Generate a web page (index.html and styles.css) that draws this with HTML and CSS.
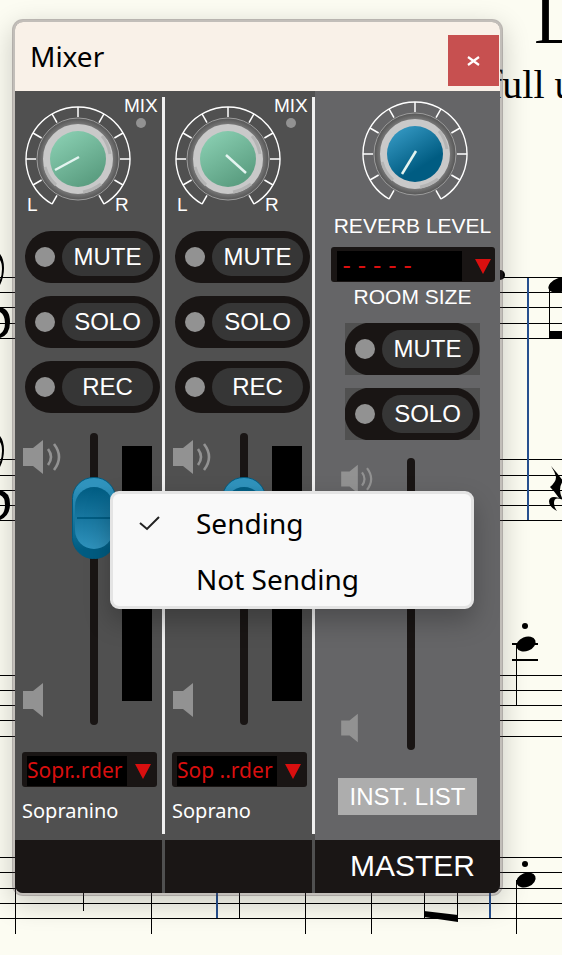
FILE: index.html
```
<!DOCTYPE html>
<html lang="en">
<head>
    <meta charset="UTF-8">
    <meta name="viewport" content="width=device-width, initial-scale=1.0">
    <title>Mixer</title>
    <link rel="stylesheet" href="styles.css">
</head>
<body>
    <!-- Score page behind the mixer -->
    <svg class="score" width="562" height="955" viewBox="0 0 562 955">
        <g class="staff">
            <path d="M0 277.5H562M0 292.5H562M0 307.5H562M0 323.5H562M0 338.5H562"/>
            <path d="M0 459.5H562M0 475.5H562M0 490.5H562M0 505.5H562M0 520.5H562"/>
            <path d="M0 675.5H562M0 690.5H562M0 705.5H562M0 720.5H562M0 736.5H562"/>
            <path d="M0 857.5H562M0 872.5H562M0 888.5H562M0 903.5H562M0 918.5H562"/>
            <path d="M15.5 880V934M83.5 880V911M151.5 880V934M239.5 880V918M305.5 880V934M371.5 880V934M424.5 880V918M457.5 880V918"/>
            <path d="M516.5 644V705M516.5 880V934M549.5 285V338"/>
        </g>
        <path class="barline" d="M528 278V520M217 880V918M490 880V918"/>
        <path d="M512 643h26v2h-26zM512 659h26v2h-26zM424 911l34 4v7l-34-5zM549 331h13v8h-13z"/>
        <ellipse cx="526" cy="644" rx="10" ry="7" transform="rotate(-22 526 644)"/>
        <ellipse cx="526" cy="880" rx="10" ry="7" transform="rotate(-22 526 880)"/>
        <ellipse cx="560" cy="285" rx="12" ry="7" transform="rotate(-18 560 285)"/>
        <circle cx="525" cy="626" r="3"/>
        <circle cx="525" cy="864" r="3"/>
        <circle cx="500" cy="275" r="5"/>
        <!-- Quarter rest -->
        <path d="M551 466Q558 474 563 481Q557 489 563 500Q554 496 554 503Q554 507 557 511Q549 507 549 501Q550 495 559 498Q554 491 550 487Q556 482 556 477Q555 472 551 466z"/>
        <!-- Clef edges -->
        <path d="M0 254Q4 259 4 268T0 285V280Q2 275 2 269T0 260zM0 307Q10 309 10 322T0 338V334Q5 331 5 323T0 312z"/>
        <path d="M0 436Q4 441 4 450T0 467V462Q2 457 2 451T0 442zM0 490Q10 492 10 504T0 520V516Q5 513 5 505T0 495z"/>
        <text class="score-title" x="534" y="43">L</text>
        <text class="score-sub" x="489" y="98">full u</text>
    </svg>

    <!-- Shared drawings -->
    <svg class="defs" width="0" height="0" aria-hidden="true">
        <defs>
            <linearGradient id="green" x1="0.2" y1="0.1" x2="0.7" y2="0.9">
                <stop offset="0" stop-color="#86cbae"/>
                <stop offset="1" stop-color="#5c9f82"/>
            </linearGradient>
            <linearGradient id="blue" x1="0.2" y1="0.1" x2="0.7" y2="0.9">
                <stop offset="0" stop-color="#3093bd"/>
                <stop offset="0.8" stop-color="#005c82"/>
            </linearGradient>
            <radialGradient id="rim">
                <stop offset="0.75" stop-color="#9a9a9a"/>
                <stop offset="0.88" stop-color="#707070"/>
                <stop offset="1" stop-color="#555"/>
            </radialGradient>
            <symbol id="dial" viewBox="-54 -54 108 108">
                <circle r="41" fill="url(#rim)" stroke="#9c9c9c"/>
                <circle r="31" fill="none" stroke="#c9c9c9" stroke-width="8"/>
                <path d="M-33 8Q-30 19 -22 26M24 -23Q30 -16 32 -5M5 33Q15 31 23 25" fill="none" stroke="#b4b4b4" stroke-width="3"/>
                <path d="M-26 45A52 52 0 1 1 26 45" fill="none" stroke="#fff" stroke-width="1.4"/>
                <g stroke="#fff" stroke-width="1.5">
                    <path d="M0 -52V-42"/>
                    <path d="M0 -52V-42" transform="rotate(30)"/>
                    <path d="M0 -52V-42" transform="rotate(60)"/>
                    <path d="M0 -52V-42" transform="rotate(90)"/>
                    <path d="M0 -52V-42" transform="rotate(120)"/>
                    <path d="M0 -52V-42" transform="rotate(150)"/>
                    <path d="M0 -52V-42" transform="rotate(-30)"/>
                    <path d="M0 -52V-42" transform="rotate(-60)"/>
                    <path d="M0 -52V-42" transform="rotate(-90)"/>
                    <path d="M0 -52V-42" transform="rotate(-120)"/>
                    <path d="M0 -52V-42" transform="rotate(-150)"/>
                </g>
            </symbol>
            <symbol id="loud" viewBox="0 0 38 36">
                <path d="M0 9H10L20 1V35L10 27H0z" fill="#929292"/>
                <path d="M25 10Q31 18 25 26M31 5Q41 18 31 31" fill="none" stroke="#929292" stroke-width="2.6"/>
            </symbol>
            <symbol id="quiet" viewBox="0 0 38 36">
                <path d="M0 9H10L20 1V35L10 27H0z" fill="#929292"/>
            </symbol>
        </defs>
    </svg>

    <main class="window">
        <header class="titlebar">
            <h1>Mixer</h1>
            <button class="close" aria-label="Close">
                <svg width="13" height="12" viewBox="0 0 13 12"><path d="M1 2L12 10M12 2L1 10" stroke="#fff" stroke-width="2.2"/></svg>
            </button>
        </header>

        <div class="strips">
            <section class="strip">
                <svg class="knob" width="147" height="140" viewBox="0 0 147 140" role="img" aria-label="Pan">
                    <use href="#dial" x="9" y="14" width="108" height="108"/>
                    <circle cx="63" cy="68" r="28" fill="url(#green)"/>
                    <path class="pointer" d="M64 66L40 79"/>
                    <text x="109" y="21">MIX</text>
                    <circle class="led" cx="126" cy="32" r="5"/>
                    <text x="12" y="120">L</text>
                    <text x="100" y="120">R</text>
                </svg>
                <div class="buttons">
                    <button class="toggle"><span>MUTE</span></button>
                    <button class="toggle"><span>SOLO</span></button>
                    <button class="toggle"><span>REC</span></button>
                </div>
                <div class="volume">
                    <div class="speakers">
                        <svg width="38" height="36"><use href="#loud"/></svg>
                        <svg width="38" height="36"><use href="#quiet"/></svg>
                    </div>
                    <input class="fader" type="range" min="0" max="100" value="79" aria-label="Sopranino volume">
                    <div class="meter"></div>
                </div>
                <select class="patch" aria-label="Sopranino sound">
                    <option>Sopr..rder</option>
                </select>
                <p class="name">Sopranino</p>
                <footer class="label"></footer>
            </section>

            <div class="divider"></div>

            <section class="strip">
                <svg class="knob" width="147" height="140" viewBox="0 0 147 140" role="img" aria-label="Pan">
                    <use href="#dial" x="9" y="14" width="108" height="108"/>
                    <circle cx="63" cy="68" r="28" fill="url(#green)"/>
                    <path class="pointer" d="M61 64L81 82"/>
                    <text x="109" y="21">MIX</text>
                    <circle class="led" cx="126" cy="32" r="5"/>
                    <text x="12" y="120">L</text>
                    <text x="100" y="120">R</text>
                </svg>
                <div class="buttons">
                    <button class="toggle"><span>MUTE</span></button>
                    <button class="toggle"><span>SOLO</span></button>
                    <button class="toggle"><span>REC</span></button>
                </div>
                <div class="volume">
                    <div class="speakers">
                        <svg width="38" height="36"><use href="#loud"/></svg>
                        <svg width="38" height="36"><use href="#quiet"/></svg>
                    </div>
                    <input class="fader" type="range" min="0" max="100" value="79" aria-label="Soprano volume">
                    <div class="meter"></div>
                </div>
                <select class="patch" aria-label="Soprano sound">
                    <option>Sop ..rder</option>
                </select>
                <p class="name">Soprano</p>
                <footer class="label"></footer>
            </section>

            <div class="divider"></div>

            <section class="strip master">
                <div class="master-top">
                    <svg class="knob" width="147" height="120" viewBox="0 0 147 120" role="img" aria-label="Reverb level">
                        <use href="#dial" x="22" y="9" width="108" height="108"/>
                        <circle cx="76" cy="63" r="28" fill="url(#blue)"/>
                        <path class="pointer" d="M77 60L63 83"/>
                    </svg>
                    <p class="caption">REVERB LEVEL</p>
                    <select class="patch room" id="room">
                        <option>- - - - -</option>
                    </select>
                    <label class="caption" for="room">ROOM SIZE</label>
                    <div class="buttons">
                        <button class="toggle"><span>MUTE</span></button>
                        <button class="toggle"><span>SOLO</span></button>
                    </div>
                </div>
                <div class="volume">
                    <div class="speakers">
                        <svg width="32" height="30"><use href="#loud"/></svg>
                        <svg width="32" height="30"><use href="#quiet"/></svg>
                    </div>
                    <input class="fader" type="range" min="0" max="100" value="79" aria-label="Master volume">
                </div>
                <button class="inst-list">INST. LIST</button>
                <footer class="label">MASTER</footer>
            </section>
        </div>
    </main>

    <div class="menu" role="menu">
        <button class="menu-item" role="menuitemradio" aria-checked="true">
            <svg width="22" height="18" viewBox="0 0 22 18"><path d="M1 9L8 15L20 3" fill="none" stroke="#222" stroke-width="2"/></svg>
            <span>Sending</span>
        </button>
        <button class="menu-item" role="menuitemradio" aria-checked="false">
            <span>Not Sending</span>
        </button>
    </div>
</body>
</html>
```
FILE: styles.css
```
* {
    margin: 0;
    padding: 0;
    box-sizing: border-box;
}

body {
    position: relative;
    min-height: 100vh;
    padding: 19px 12px;
    background: #fcfcf2;
    font-family: "Liberation Sans", Arial, sans-serif;
    overflow: hidden;
}

button,
select {
    border: none;
    font-family: inherit;
    cursor: pointer;
}

/* Score */
.score {
    position: absolute;
    top: 0;
    left: 0;
}

.staff path {
    stroke: #000;
    stroke-width: 1;
}

.barline {
    stroke: #27508f;
    stroke-width: 2;
}

.score text {
    font-family: "Liberation Serif", "Times New Roman", serif;
}

.score-title {
    font-size: 72px;
}

.score-sub {
    font-size: 40px;
}

.defs {
    position: absolute;
}

/* Window */
.window {
    position: relative;
    max-width: 491px;
    border: 3px solid rgba(70, 60, 65, 0.32);
    border-radius: 11px;
    background: #505050;
    background-clip: padding-box;
    box-shadow: 0 8px 28px rgba(0, 0, 0, 0.2);
    overflow: hidden;
}

.titlebar {
    display: flex;
    justify-content: space-between;
    align-items: flex-start;
    padding: 13px 1px 5px 15px;
    background: #f9f1e8;
}

.titlebar h1 {
    font-family: "Noto Sans", "Segoe UI", sans-serif;
    font-size: 28px;
    font-weight: 400;
    line-height: 42px;
}

.close {
    display: flex;
    align-items: center;
    justify-content: center;
    width: 51px;
    height: 51px;
    background: #c75050;
}

.strips {
    display: flex;
}

.strip {
    display: flex;
    flex-direction: column;
    width: 147px;
}

.divider {
    width: 3px;
    margin-top: 6px;
    background: linear-gradient(#f0f0f0, #f0f0f0) no-repeat;
    background-size: 3px calc(100% - 59px);
}

/* Knobs */
.knob {
    display: block;
}

.knob text {
    font-size: 19px;
    fill: #fff;
}

.pointer {
    stroke: #e4f4f0;
    stroke-width: 2.5;
}

.led {
    fill: #929292;
}

/* Toggle buttons */
.buttons {
    display: flex;
    flex-direction: column;
    gap: 13px;
    margin-left: 10px;
}

.toggle {
    display: flex;
    align-items: center;
    justify-content: space-between;
    width: 135px;
    height: 52px;
    padding: 0 7px 0 10px;
    border-radius: 26px;
    background: #191514;
    color: #fff;
    font-size: 24px;
}

.toggle::before {
    content: "";
    width: 20px;
    height: 20px;
    border-radius: 50%;
    background: #929292;
}

.toggle span {
    width: 91px;
    border-radius: 19px;
    background: #363636;
    line-height: 38px;
}

/* Volume */
.volume {
    display: grid;
    grid-template-columns: 49px 44px 36px;
    height: 292px;
    margin: 20px 0 27px 8px;
}

.speakers {
    display: flex;
    flex-direction: column;
    justify-content: space-between;
    padding: 6px 0 7px;
}

.fader {
    width: 44px;
    height: 292px;
    appearance: none;
    writing-mode: vertical-lr;
    direction: rtl;
    background: none;
}

.fader::-webkit-slider-runnable-track {
    width: 44px;
    height: 292px;
    background: url("data:image/svg+xml,%3Csvg xmlns='http://www.w3.org/2000/svg' width='44' height='292'%3E%3Crect x='18' width='8' height='292' rx='4' fill='%23191514'/%3E%3C/svg%3E") no-repeat;
}

.fader::-webkit-slider-thumb {
    appearance: none;
    width: 44px;
    height: 82px;
    background: url("data:image/svg+xml,%3Csvg xmlns='http://www.w3.org/2000/svg' width='44' height='82'%3E%3Cdefs%3E%3ClinearGradient id='a' x2='0' y2='1'%3E%3Cstop offset='.1' stop-color='%233093bd'/%3E%3Cstop offset='.9' stop-color='%23005c82'/%3E%3C/linearGradient%3E%3ClinearGradient id='b' x2='0' y2='1'%3E%3Cstop offset='0' stop-color='%23005c82'/%3E%3Cstop offset='.5' stop-color='%231877a0'/%3E%3Cstop offset='1' stop-color='%233093bd'/%3E%3C/linearGradient%3E%3C/defs%3E%3Crect x='.5' y='.5' width='43' height='81' rx='21' fill='url(%23a)' stroke='%23005c82'/%3E%3Crect x='3' y='10' width='38' height='62' rx='19' fill='url(%23b)'/%3E%3Cpath d='M5 41H39' stroke='%23005c82' stroke-width='2'/%3E%3C/svg%3E") no-repeat;
}

.meter {
    height: 255px;
    margin: 13px 0 0 6px;
    background: #000;
}

/* Drop-downs */
.patch {
    width: 135px;
    height: 35px;
    margin-left: 7px;
    padding: 0 0 0 5px;
    appearance: none;
    border-radius: 3px;
    background:
        url("data:image/svg+xml,%3Csvg xmlns='http://www.w3.org/2000/svg' width='16' height='16'%3E%3Cpath d='M0 0H16L8 15z' fill='%23d90f0f'/%3E%3C/svg%3E") right 6px top 12px no-repeat,
        linear-gradient(#000, #000) 5px 4px / 100px 30px no-repeat,
        #191514;
    color: #d90f0f;
    font-family: "Noto Sans", sans-serif;
    font-size: 21px;
}

.name {
    margin: 12px 0 17px 7px;
    color: #fff;
    font-family: "Noto Sans", sans-serif;
    font-size: 20px;
    line-height: 24px;
}

.label {
    height: 53px;
    margin-top: auto;
    background: #1a1615;
    color: #fff;
    font-size: 30px;
    line-height: 51px;
    text-align: center;
}

/* Master strip */
.master {
    flex: 1;
    background: #656567;
}

.master-top {
    display: flex;
    flex-direction: column;
    align-items: center;
    padding-left: 10px;
}

.caption {
    color: #fff;
    font-size: 21px;
    line-height: 30px;
    white-space: nowrap;
}

.master .room {
    width: 164px;
    margin: 6px 0 0;
    padding-left: 12px;
    background-position: right 4px top 12px, 6px 4px, 0 0;
    background-size: auto, 125px 30px, auto;
    font-family: "Liberation Sans", Arial, sans-serif;
    font-size: 25px;
}

.master .buttons {
    margin: 11px 0 0;
}

/* Darker plate behind each master button */
.master .toggle {
    background: radial-gradient(circle at 26px 26px, #191514 26px, #505050 27px) left / 27px 52px no-repeat,
        radial-gradient(circle at 0 26px, #191514 26px, #505050 27px) right / 27px 52px no-repeat,
        linear-gradient(#191514, #191514) center / 82px 52px no-repeat;
    border-radius: 0;
}

.master .volume {
    grid-template-columns: 48px 44px;
    margin: 18px 0 28px 26px;
}

.inst-list {
    align-self: center;
    width: 139px;
    height: 37px;
    margin-bottom: 24px;
    background: #adadad;
    color: #fff;
    font-size: 24px;
    white-space: nowrap;
}

.master .label {
    padding-left: 10px;
}

/* Context menu */
.menu {
    position: absolute;
    top: 491px;
    left: 110px;
    width: 364px;
    border: 3px solid #e4e4e4;
    border-radius: 9px;
    background: #f9f9f9;
    box-shadow: 0 12px 26px rgba(0, 0, 0, 0.25);
}

.menu-item {
    display: grid;
    grid-template-columns: 57px 1fr;
    align-items: center;
    width: 100%;
    height: 56px;
    padding: 2px 0 0 26px;
    background: none;
    font-family: "Noto Sans", "Segoe UI", sans-serif;
    font-size: 28px;
    text-align: left;
}

.menu-item span {
    grid-column: 2;
}
```
